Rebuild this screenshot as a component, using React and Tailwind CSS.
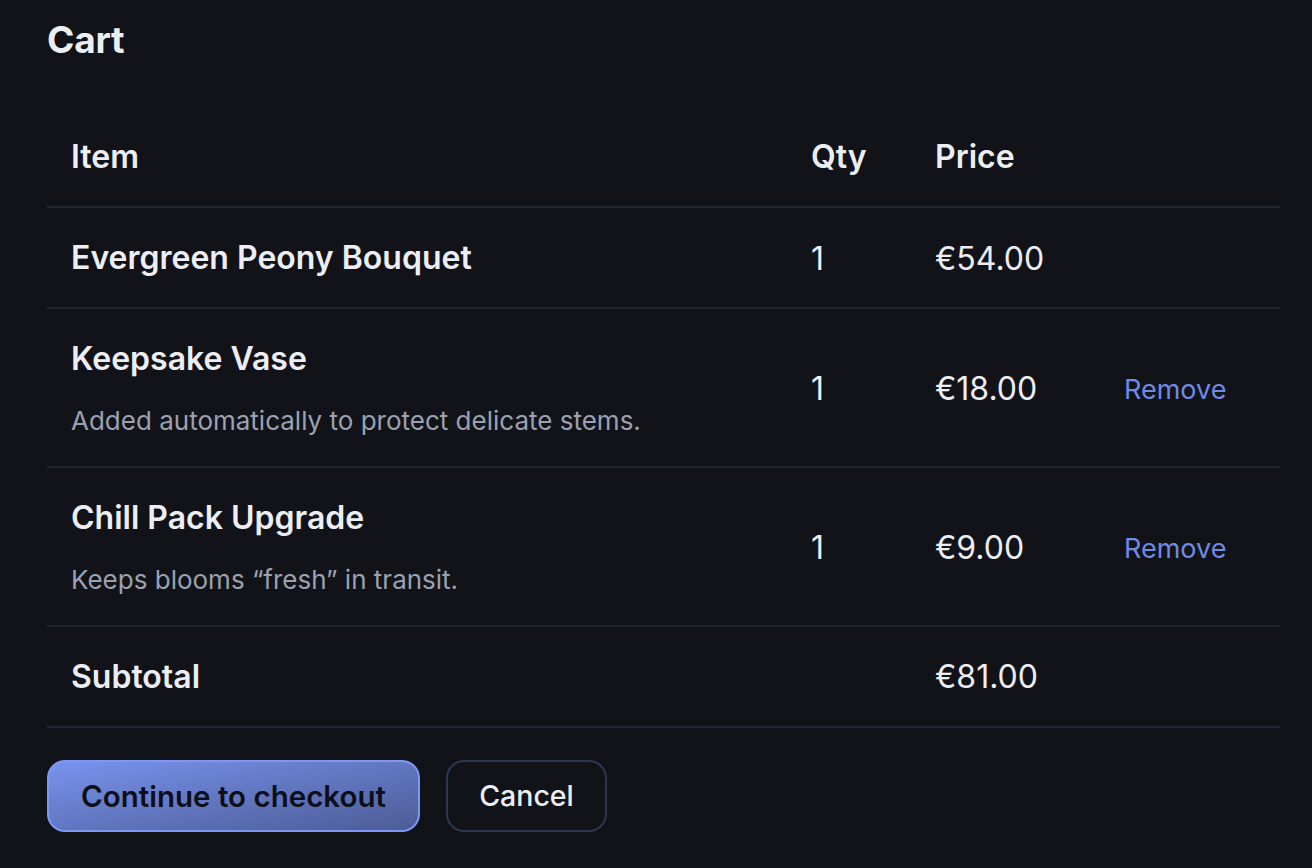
import React from "react";

const rows = [
  { name: "Evergreen Peony Bouquet", qty: "1", price: "€54.00" },
  { name: "Keepsake Vase", desc: "Added automatically to protect delicate stems.", qty: "1", price: "€18.00", remove: true },
  { name: "Chill Pack Upgrade", desc: "Keeps blooms “fresh” in transit.", qty: "1", price: "€9.00", remove: true },
];

export default function App() {
  return (
    <div
      className="min-h-[868px] w-[1312px] bg-[#111318] text-[#eceef3]"
      style={{ fontFamily: "Inter, 'Noto Sans', sans-serif" }}
    >
      <div className="pl-[47px] pr-[32px] pt-[17px]">
        <h1 className="text-[37px] leading-[45px] font-bold tracking-[-0.2px]">Cart</h1>
        <table className="mt-[45px] w-[1233px] table-fixed border-collapse">
          <colgroup>
            <col className="w-[740px]" />
            <col className="w-[124px]" />
            <col className="w-[189px]" />
            <col className="w-[180px]" />
          </colgroup>
          <thead>
            <tr className="border-b-2 border-[#212634]">
              <th className="px-[24px] pt-[28px] pb-[27px] text-left text-[32px] leading-[44px] font-semibold">Item</th>
              <th className="px-[24px] pt-[28px] pb-[27px] text-left text-[32px] leading-[44px] font-semibold">Qty</th>
              <th className="px-[24px] pt-[28px] pb-[27px] text-left text-[32px] leading-[44px] font-semibold">Price</th>
              <th className="px-[24px] pt-[28px] pb-[27px]"></th>
            </tr>
          </thead>
          <tbody>
            {rows.map((r) => (
              <tr key={r.name} className="border-b-2 border-[#212634]">
                <td className="px-[24px] pt-[28px] pb-[27px] align-middle">
                  <div className="text-[32px] leading-[44px] font-semibold">{r.name}</div>
                  {r.desc && (
                    <div className="mt-[21px] pt-[1px] text-[26px] leading-[36px] text-[#9ba1b0]">{r.desc}</div>
                  )}
                </td>
                <td className="px-[24px] pt-[29px] pb-[26px] text-[32px] leading-[44px] align-middle">{r.qty}</td>
                <td className="px-[24px] pt-[29px] pb-[26px] text-[32px] leading-[44px] align-middle">{r.price}</td>
                <td className="px-[24px] pt-[30px] pb-[25px] align-middle">
                  {r.remove && (
                    <span className="text-[27px] leading-[44px] text-[#6f8be3]">Remove</span>
                  )}
                </td>
              </tr>
            ))}
            <tr className="border-b-2 border-[#212634]">
              <td className="px-[24px] pt-[28px] pb-[27px] text-[32px] leading-[44px] font-semibold">Subtotal</td>
              <td className="px-[24px] pt-[28px] pb-[27px]"></td>
              <td className="px-[24px] pt-[28px] pb-[27px] text-[32px] leading-[44px]">€81.00</td>
              <td className="px-[24px] pt-[28px] pb-[27px]"></td>
            </tr>
          </tbody>
        </table>
        <div className="mt-[32px] flex gap-[26px]">
          <button className="h-[72px] w-[373px] rounded-[18px] border-2 border-[#7d97f2] bg-gradient-to-br from-[#7993ee] to-[#4c5c96] text-[29.5px] font-semibold text-[#0c0f18]">
            Continue to checkout
          </button>
          <button className="h-[72px] w-[161px] rounded-[18px] border-2 border-[#2d3653] bg-[#111318] text-[28.5px] font-medium text-[#eceef3]">
            Cancel
          </button>
        </div>
      </div>
    </div>
  );
}
